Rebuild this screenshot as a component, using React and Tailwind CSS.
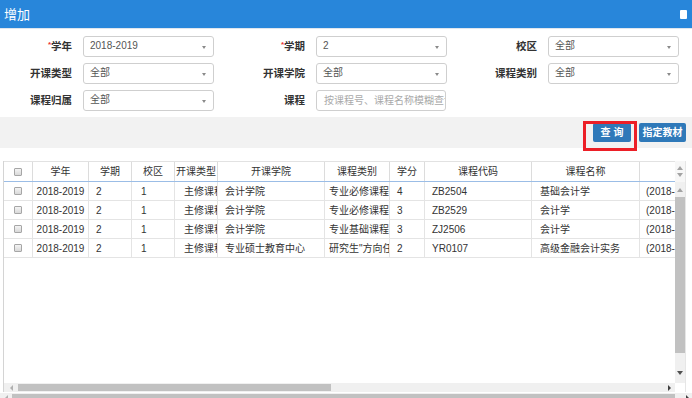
import React from "react";

const cols = [
  { w: 29, title: "", cls: "justify-center" },
  { w: 56, title: "学年", cls: "justify-center" },
  { w: 43, title: "学期", cls: "pl-[7px]" },
  { w: 43, title: "校区", cls: "pl-[9px]" },
  { w: 43, title: "开课类型", cls: "pl-[9px]" },
  { w: 107, title: "开课学院", cls: "pl-[7px]" },
  { w: 65, title: "课程类别", cls: "pl-[4px]" },
  { w: 35, title: "学分", cls: "pl-[7px]" },
  { w: 107, title: "课程代码", cls: "pl-[7px]" },
  { w: 108, title: "课程名称", cls: "pl-[8px]" },
  { w: 100, title: "", cls: "pl-[6px]" },
];

const rows = [
  ["2018-2019", "2", "1", "主修课程", "会计学院", "专业必修课程", "4", "ZB2504", "基础会计学", "(2018-2019-2)"],
  ["2018-2019", "2", "1", "主修课程", "会计学院", "专业必修课程", "3", "ZB2529", "会计学", "(2018-2019-2)"],
  ["2018-2019", "2", "1", "主修课程", "会计学院", "专业基础课程", "3", "ZJ2506", "会计学", "(2018-2019-2)"],
  ["2018-2019", "2", "1", "主修课程", "专业硕士教育中心", "研究生\"方向任选课\"", "2", "YR0107", "高级金融会计实务", "(2018-2019-2)"],
];

function Checkbox() {
  return (
    <span className="block w-[8px] h-[8px] border border-[#a6a6a6] rounded-[1px] bg-gradient-to-b from-[#f4f4f4] to-[#d9d9d9]" />
  );
}

function Select({ value }) {
  return (
    <div className="w-[131px] h-[21px] border border-[#cfcfcf] rounded-[3px] bg-white flex items-center justify-between pl-[6px] pr-[7px] pb-[2px]">
      <span className="text-[10px] text-[#555]">{value}</span>
      <span className="w-0 h-0 border-l-[2px] border-r-[2px] border-t-[3px] border-l-transparent border-r-transparent border-t-[#8a8a8a] mt-[3px]" />
    </div>
  );
}

function Field({ label, required, children }) {
  return (
    <div className="flex items-center">
      <div className="w-[72px] text-right text-[10.5px] font-bold text-[#333]">
        {required && <span className="text-[#e33] text-[8px] align-top">*</span>}
        {label}
      </div>
      <div className="ml-[11px]">{children}</div>
    </div>
  );
}

function Tri({ dir }) {
  const map = {
    up: "border-l-[3px] border-r-[3px] border-b-[4px] border-l-transparent border-r-transparent border-b-[#a3a3a3]",
    down: "border-l-[3px] border-r-[3px] border-t-[4px] border-l-transparent border-r-transparent border-t-[#505050]",
    left: "border-t-[3px] border-b-[3px] border-r-[3px] border-t-transparent border-b-transparent border-r-[#b0b0b0]",
    right: "border-t-[3px] border-b-[3px] border-l-[3px] border-t-transparent border-b-transparent border-l-[#404040]",
  };
  return <span className={"block w-0 h-0 " + map[dir]} />;
}

export default function App() {
  return (
    <div className="w-[692px] h-[398px] overflow-hidden bg-white font-[family-name:'Liberation_Sans','Noto_Sans_CJK_SC',sans-serif] text-[#333]">
      {/* title bar */}
      <div className="h-[28px] bg-[#2886da] flex items-center justify-between pl-[4px] pr-[5px]">
        <span className="text-white text-[13px] leading-none">增加</span>
        <span className="block w-[7px] h-[9px] bg-white rounded-[1px]" />
      </div>
      <div className="h-[1px] bg-[#dfe6ee]" />

      {/* search form */}
      <div className="pt-[7px] pb-[6px] grid grid-cols-[233px_232px_227px] gap-y-[6px]">
        <Field label="学年" required><Select value="2018-2019" /></Field>
        <Field label="学期" required><Select value="2" /></Field>
        <Field label="校区"><Select value="全部" /></Field>
        <Field label="开课类型"><Select value="全部" /></Field>
        <Field label="开课学院"><Select value="全部" /></Field>
        <Field label="课程类别"><Select value="全部" /></Field>
        <Field label="课程归属"><Select value="全部" /></Field>
        <Field label="课程">
          <div className="w-[130px] h-[21px] border border-[#cfcfcf] rounded-[3px] bg-white flex items-center pl-[7px] pb-[1px] overflow-hidden whitespace-nowrap">
            <span className="text-[10px] text-[#aaa]">按课程号、课程名称模糊查询</span>
          </div>
        </Field>
      </div>

      {/* toolbar */}
      <div className="relative h-[31px] bg-[#f2f2f2] flex items-center justify-end pr-[6px] gap-[8px]">
        <button className="w-[38px] h-[19px] bg-[#2f79b9] text-white text-[10px] font-bold rounded-[2px] tracking-[3px] pl-[3px]">查询</button>
        <button className="w-[47px] h-[19px] bg-[#2f79b9] text-white text-[10px] font-bold rounded-[2px]">指定教材</button>
        <div className="absolute left-[583px] top-[4px] w-[54px] h-[30px] border-[3px] border-[#ec1f27]" />
      </div>

      {/* grid */}
      <div className="mt-[13px] ml-[3px] w-[683px] h-[231px] border-l border-[#d4d4d4] flex flex-col">
        <div className="flex flex-1 min-h-0">
          <div className="w-[672px] overflow-hidden flex flex-col">
            <div className="flex h-[21px] border-t border-b border-t-[#e2e2e2] border-b-[#9bbde6] bg-white shrink-0">
              {cols.map((c, i) => (
                <div
                  key={i}
                  style={{ width: c.w }}
                  className="shrink-0 h-full flex items-center justify-center border-r border-[#dcdcdc] text-[10px] whitespace-nowrap overflow-hidden"
                >
                  {i === 0 ? <Checkbox /> : c.title}
                </div>
              ))}
            </div>
            {rows.map((r, ri) => (
              <div key={ri} className="flex h-[19px] border-b border-[#e4e4e4] shrink-0">
                {cols.map((c, i) => (
                  <div
                    key={i}
                    style={{ width: c.w }}
                    className={"shrink-0 h-full flex items-center border-r border-[#e4e4e4] text-[10px] whitespace-nowrap overflow-hidden " + c.cls}
                  >
                    {i === 0 ? <Checkbox /> : r[i - 1]}
                  </div>
                ))}
              </div>
            ))}
          </div>
          {/* vertical scrollbars */}
          <div className="w-[11px] flex flex-col border-r border-[#e6e6e6]">
            <div className="h-[21px] bg-[#f7f7f7] flex flex-col items-center justify-center gap-[3px] shrink-0">
              <Tri dir="up" />
              <span className="block w-0 h-0 border-l-[3px] border-r-[3px] border-t-[4px] border-l-transparent border-r-transparent border-t-[#a3a3a3]" />
            </div>
            <div className="flex-1 bg-[#f0f0f0] flex flex-col items-center">
              <div className="h-[15px] flex items-center"><Tri dir="up" /></div>
              <div className="w-[10px] h-[156px] bg-[#c1c1c1]" />
              <div className="flex-1" />
              <div className="h-[18px] flex items-center pb-[2px]"><Tri dir="down" /></div>
            </div>
          </div>
        </div>
        {/* inner horizontal scrollbar */}
        <div className="h-[9px] flex shrink-0">
          <div className="w-[672px] bg-[#f0f0f0] flex items-center">
            <div className="w-[14px] flex justify-center"><Tri dir="left" /></div>
            <div className="w-[313px] h-[7px] bg-[#c1c1c1]" />
            <div className="flex-1" />
            <div className="w-[12px] flex justify-center"><Tri dir="right" /></div>
          </div>
          <div className="w-[11px] bg-white border-r border-[#e6e6e6]" />
        </div>
      </div>

      {/* outer horizontal scrollbar */}
      <div className="mt-[1px] h-[8px] bg-[#f0f0f0] flex items-start pt-[1px]">
        <div className="w-[12px] flex justify-center pt-[1px]"><Tri dir="left" /></div>
        <div className="w-[663px] h-[6px] bg-[#c1c1c1]" />
        <div className="flex-1 flex justify-end pr-[3px] pt-[1px]"><Tri dir="right" /></div>
      </div>
    </div>
  );
}
